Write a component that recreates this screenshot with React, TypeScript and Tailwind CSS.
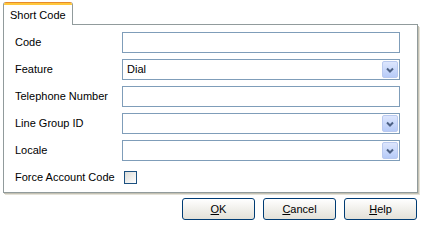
import React from 'react';

const font = { fontFamily: '"Liberation Sans", Arial, sans-serif' };

const TextBox: React.FC = () => (
  <div className="w-[278px] h-[21px] border border-[#7f9db9] bg-white" />
);

const ComboBox: React.FC<{ value?: string }> = ({ value }) => (
  <div className="w-[278px] h-[21px] border border-[#7f9db9] bg-white flex items-center justify-between p-px">
    <span className="pl-[3px] text-[11px] text-black leading-none">{value}</span>
    <div className="w-[16px] h-full rounded-[2px] border border-[#b9c9ef] bg-gradient-to-b from-[#dde6fd] to-[#b7cbf8] flex items-center justify-center">
      <svg width="8" height="6" viewBox="0 0 8 6">
        <path d="M1 1.5 L4 4.5 L7 1.5" fill="none" stroke="#4d6185" strokeWidth="2" />
      </svg>
    </div>
  </div>
);

const Row: React.FC<{ label: string; children: React.ReactNode }> = ({ label, children }) => (
  <div className="h-[21px] flex items-center">
    <div className="w-[107px] text-[11px] text-black leading-none">{label}</div>
    {children}
  </div>
);

const XpButton: React.FC<{ hot: string; rest: string }> = ({ hot, rest }) => (
  <button className="w-[73px] h-[22px] rounded-[3px] border border-[#003c74] bg-gradient-to-b from-white to-[#e3e1d8] text-[11px] text-black leading-none flex items-center justify-center">
    <span>
      <span className="underline">{hot}</span>
      {rest}
    </span>
  </button>
);

export default function App() {
  return (
    <div className="w-[423px] h-[222px] bg-white pt-[2px] pl-[3px] overflow-hidden" style={font}>
      {/* tab strip */}
      <div className="flex w-[415px] h-[23px]">
        <div className="w-[70px] h-[23px] flex flex-col border-l border-r border-[#919b9c] rounded-t-[3px] overflow-hidden bg-white">
          <div className="h-px bg-[#e68b2c]" />
          <div className="h-[2px] bg-[#ffc73c]" />
          <div className="flex-1 flex items-center pl-[6px] text-[11px] text-black leading-none">Short Code</div>
        </div>
        <div className="flex-1 border-b border-[#919b9c]" />
      </div>
      {/* tab page */}
      <div className="w-[415px] border-l border-r border-b border-[#919b9c] bg-white pt-[7px] pb-[4px] pl-[11px] flex flex-col gap-[6px] shadow-[1px_1px_0_#c4c1b3,2px_2px_0_#e4e2d8]">
        <Row label="Code">
          <TextBox />
        </Row>
        <Row label="Feature">
          <ComboBox value="Dial" />
        </Row>
        <Row label="Telephone Number">
          <TextBox />
        </Row>
        <Row label="Line Group ID">
          <ComboBox />
        </Row>
        <Row label="Locale">
          <ComboBox />
        </Row>
        <Row label="Force Account Code">
          <div className="ml-[2px] w-[13px] h-[13px] border border-[#1c5180] bg-gradient-to-br from-[#dcdcd7] to-white" />
        </Row>
      </div>
      {/* buttons */}
      <div className="mt-[5px] flex justify-end gap-[8px] w-[414px]">
        <XpButton hot="O" rest="K" />
        <XpButton hot="C" rest="ancel" />
        <XpButton hot="H" rest="elp" />
      </div>
    </div>
  );
}
